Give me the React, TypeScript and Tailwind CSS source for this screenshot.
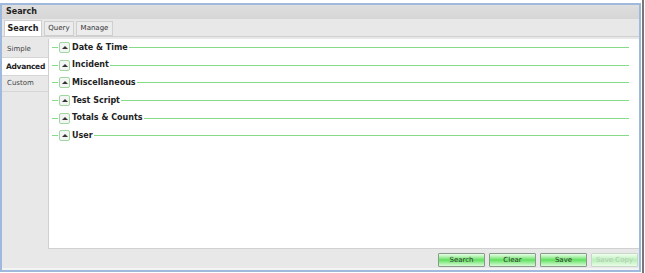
import React from "react";

const grupos = ["Date & Time", "Incident", "Miscellaneous", "Test Script", "Totals & Counts", "User"];

const Grupo = ({ titulo }: { titulo: string }) => (
  <div className="flex items-center h-[17.6px]">
    <div className="w-[6px] h-px bg-[#86dc86] ml-[3px]" />
    <div className="mx-[1px] w-[11px] h-[11px] border border-[#9ed89e] rounded-[2px] bg-[#f4f4f4] flex items-center justify-center">
      <div className="w-0 h-0 border-l-[3px] border-r-[3px] border-b-[3px] border-l-transparent border-r-transparent border-b-[#333]" />
    </div>
    <span className="px-[1px] font-bold text-[8px] text-[#222] leading-none">{titulo}</span>
    <div className="flex-1 h-px bg-[#86dc86] mr-[10px]" />
  </div>
);

const Boton = ({ texto, off }: { texto: string; off?: boolean }) => (
  <button
    className={
      "w-[47px] h-[14px] border text-[7px] leading-none rounded-[1px] " +
      (off
        ? "border-[#c8d8c8] text-[#b8c8b8] bg-gradient-to-b from-[#f0fff0] via-[#b8f0b8] to-[#e8fce8]"
        : "border-[#8a9a8a] text-[#333] bg-gradient-to-b from-[#e8ffe8] via-[#5ee05e] to-[#d8fcd8]")
    }
  >
    {texto}
  </button>
);

export default function App() {
  return (
    <div className="w-[645px] h-[273px] bg-white flex" style={{ fontFamily: '"DejaVu Sans", Tahoma, sans-serif' }}>
      <div className="mt-[3px] w-[641px] h-[269px] border-2 border-[#9fb9dc] bg-[#e8e8e8] flex flex-col">
        <div className="h-[14px] bg-gradient-to-b from-[#dedede] to-[#d6d6d6] flex items-center px-[4px]">
          <span className="font-bold text-[8px] text-[#222]">Search</span>
        </div>
        <div className="h-[18px] flex items-end px-[2px] gap-[2px] border-b border-[#d0d0d0] bg-[#e8e8e8]">
          <div className="h-[16px] w-[38px] bg-white border border-[#cfcfcf] border-b-0 flex items-center justify-center font-bold text-[8px] text-[#222]">Search</div>
          <div className="h-[15px] w-[30px] bg-[#ececec] border border-[#cfcfcf] flex items-center justify-center text-[7px] text-[#333]">Query</div>
          <div className="h-[15px] w-[37px] bg-[#ececec] border border-[#cfcfcf] flex items-center justify-center text-[7px] text-[#333]">Manage</div>
        </div>
        <div className="flex flex-1 pt-[2px]">
          <div className="w-[46px] flex flex-col pt-[2px]">
            <div className="h-[17px] border-b border-[#d6d6d6] flex items-center pl-[5px] text-[7px] text-[#444]">Simple</div>
            <div className="h-[17px] bg-white flex items-center pl-[4px] font-bold text-[7.5px] tracking-[-0.3px] text-[#222]">Advanced</div>
            <div className="h-[17px] border-y border-[#d6d6d6] flex items-center pl-[5px] text-[7px] text-[#444]">Custom</div>
          </div>
          <div className="flex-1 flex flex-col">
            <div className="h-[210px] bg-white border-l border-b border-[#d0d0d0]">
              {grupos.map((g) => (
                <Grupo key={g} titulo={g} />
              ))}
            </div>
            <div className="flex-1 flex items-start justify-end gap-[4px] pt-[4px] pr-[1px]">
              <Boton texto="Search" />
              <Boton texto="Clear" />
              <Boton texto="Save" />
              <Boton texto="Save Copy" off />
            </div>
          </div>
        </div>
        <div className="h-[2px] bg-[#f4f4f4]" />
      </div>
      <div className="w-[2px] h-[273px] bg-[#777] ml-[1px]" />
    </div>
  );
}
